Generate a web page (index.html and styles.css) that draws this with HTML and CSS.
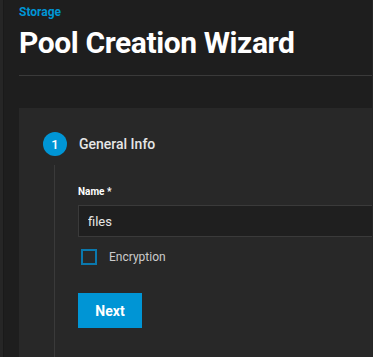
FILE: index.html
```html
<!DOCTYPE html>
<html lang="en">
<head>
    <meta charset="UTF-8">
    <meta name="viewport" content="width=device-width, initial-scale=1.0">
    <title>Pool Creation Wizard</title>
    <link rel="stylesheet" href="styles.css">
</head>
<body>
    <main class="page">
        <header class="page-header">
            <a href="#" class="crumb">Storage</a>
            <h1>Pool Creation Wizard</h1>
        </header>

        <section class="card">
            <div class="step-head">
                <div class="step-num">1</div>
                <h2>General Info</h2>
            </div>

            <div class="step-body">
                <label class="field-label" for="poolName">Name *</label>
                <input type="text" id="poolName" class="field-input" value="files">

                <label class="checkbox">
                    <span class="box"></span>
                    <span>Encryption</span>
                </label>

                <button class="next-button">Next</button>
            </div>
        </section>
    </main>
</body>
</html>
```

FILE: styles.css
```css
html {
    overflow: hidden;
}
body {
    font-family: Roboto, 'Noto Sans', sans-serif;
    margin: 0;
    padding: 0;
    background-color: #1e1e1e;
    color: #e0e0e0;
    border-left: 3px solid #262626;
    border-right: 1px solid #262626;
    height: 357px;
    display: flex;
    flex-direction: column;
}
.page {
    flex: 1;
    display: flex;
    flex-direction: column;
    border-left: 1px solid #1a1a1a;
    padding-left: 15px;
}
.page-header {
    border-bottom: 1px solid #3a3a3a;
    padding-top: 4px;
    height: 76px;
    box-sizing: border-box;
}
.crumb {
    display: block;
    color: #0095d5;
    font-size: 12px;
    font-weight: bold;
    text-decoration: none;
    line-height: 16px;
}
h1 {
    margin: 5px 0 0;
    color: #ffffff;
    font-size: 30px;
    font-weight: bold;
    line-height: 36px;
    letter-spacing: -0.4px;
}
.card {
    flex: 1;
    margin-top: 32px;
    background-color: #282828;
    padding: 24px 0 0 24px;
    display: flex;
    flex-direction: column;
    overflow: hidden;
}
.step-head {
    display: flex;
    align-items: center;
    gap: 12px;
}
.step-num {
    width: 24px;
    height: 24px;
    border-radius: 50%;
    background-color: #0095d5;
    color: #ffffff;
    font-size: 13px;
    font-weight: 500;
    display: flex;
    align-items: center;
    justify-content: center;
}
h2 {
    margin: 0;
    font-size: 14px;
    font-weight: 500;
    color: #e6e6e6;
}
.step-body {
    flex: 1;
    margin: 9px 0 0 11px;
    border-left: 1px solid #3a3a3a;
    padding: 21px 0 0 23px;
}
.field-label {
    display: block;
    font-size: 10px;
    font-weight: bold;
    color: #ffffff;
    line-height: 12px;
    margin-bottom: 7px;
}
.field-input {
    display: block;
    width: 100%;
    height: 32px;
    box-sizing: border-box;
    background-color: #1f1f1f;
    border: 1px solid #3a3a3a;
    border-right: none;
    color: #e6e6e6;
    font-family: Roboto, sans-serif;
    font-size: 13px;
    padding: 0 9px;
    outline: none;
}
.checkbox {
    display: flex;
    align-items: center;
    gap: 12px;
    margin: 12px 0 0 3px;
    font-size: 12px;
    color: #cccccc;
}
.box {
    width: 16px;
    height: 16px;
    box-sizing: border-box;
    border: 2px solid #0a78ad;
}
.next-button {
    display: block;
    margin-top: 28px;
    width: 64px;
    height: 35px;
    border: none;
    border-radius: 0;
    background-color: #0095d5;
    color: #ffffff;
    font-family: Roboto, sans-serif;
    font-size: 14px;
    font-weight: bold;
    cursor: pointer;
}
```
